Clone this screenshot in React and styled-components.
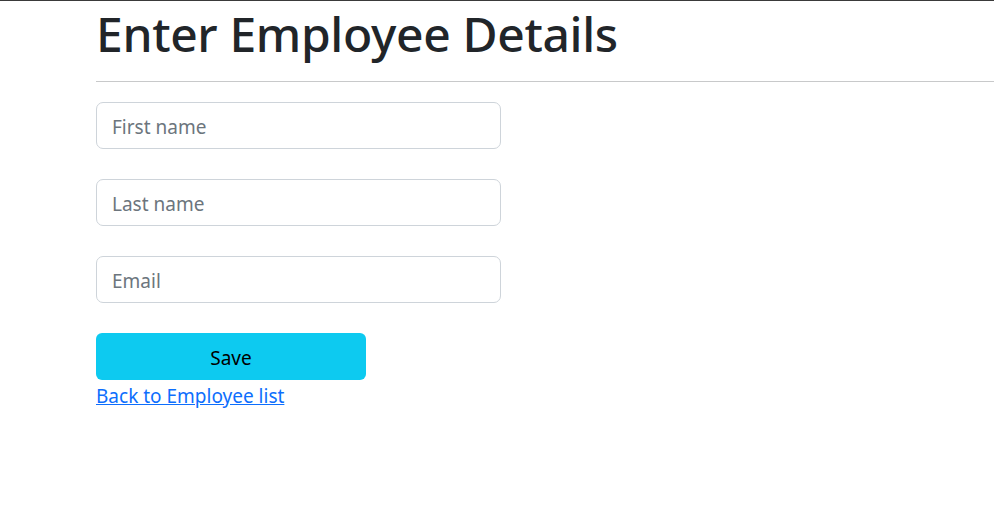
import React from 'react';
import styled, { createGlobalStyle } from 'styled-components';

const GlobalStyle = createGlobalStyle`
  body {
    margin: 0;
    background: #fff;
    color: #212529;
    font-family: 'Noto Sans', 'Open Sans', sans-serif;
  }
`;

const TopRule = styled.div`
  height: 1px;
  background-color: #3a3a3a;
`;

const Page = styled.div`
  margin-left: 96px;
`;

const Title = styled.h1`
  margin: 0;
  padding-top: 3px;
  font-size: 48px;
  font-weight: 500;
  letter-spacing: -0.35px;
  line-height: 59px;
  color: #212529;
`;

const Divider = styled.hr`
  margin: 18px 0 20px;
  border: 0;
  border-top: 1px solid #c8c9ca;
`;

const Form = styled.form`
  display: flex;
  flex-direction: column;
  align-items: flex-start;
  gap: 30px;
`;

const Field = styled.input`
  box-sizing: border-box;
  width: 405px;
  height: 47px;
  padding: 2px 15px 0;
  font-family: inherit;
  font-size: 19px;
  color: #212529;
  border: 1px solid #ced4da;
  border-radius: 7px;
  outline: none;

  &::placeholder {
    color: #6c757d;
  }
`;

const SaveButton = styled.button`
  width: 270px;
  height: 47px;
  padding: 2px 0 0;
  border: none;
  border-radius: 6px;
  background-color: #0dcaf0;
  color: #000;
  font-family: inherit;
  font-size: 19px;
  cursor: pointer;
`;

const BackLink = styled.a`
  display: inline-block;
  margin-top: 1px;
  font-size: 19px;
  line-height: 30px;
  color: #0d6efd;
  text-decoration: underline;
`;

export default function App() {
  return (
    <>
      <GlobalStyle />
      <TopRule />
      <Page>
        <Title>Enter Employee Details</Title>
        <Divider />
        <Form onSubmit={(e) => e.preventDefault()}>
          <Field type="text" placeholder="First name" />
          <Field type="text" placeholder="Last name" />
          <Field type="email" placeholder="Email" />
          <SaveButton type="submit">Save</SaveButton>
        </Form>
        <BackLink href="#">Back to Employee list</BackLink>
      </Page>
    </>
  );
}
